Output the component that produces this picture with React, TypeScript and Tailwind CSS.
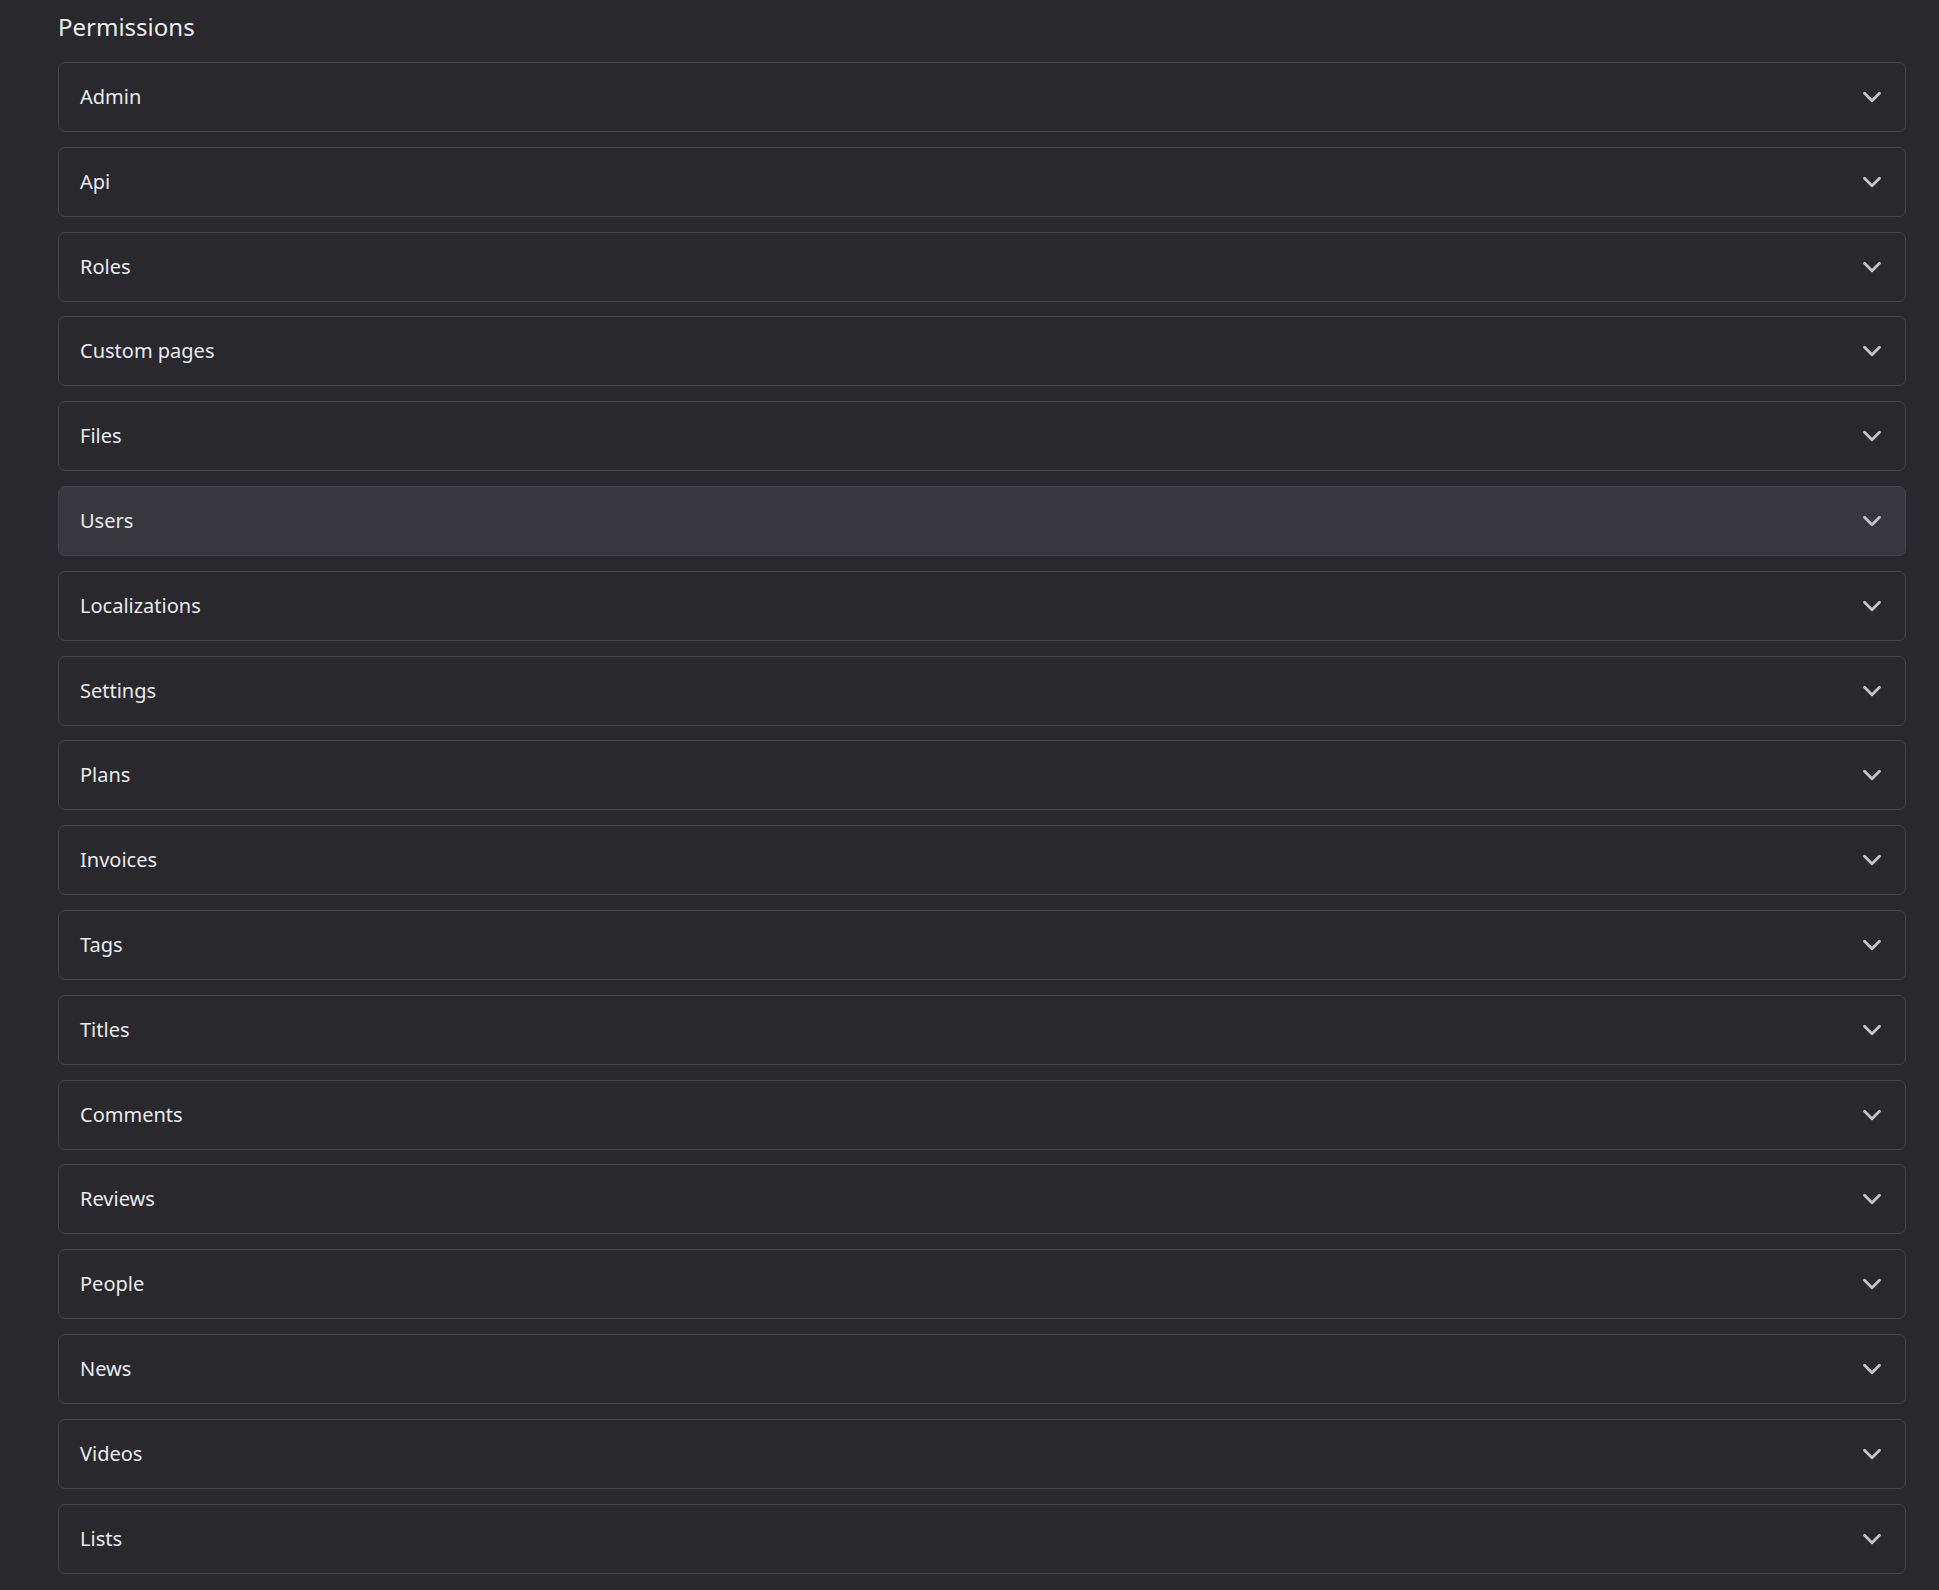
import React, { useState } from 'react';

const groups = [
  'Admin',
  'Api',
  'Roles',
  'Custom pages',
  'Files',
  'Users',
  'Localizations',
  'Settings',
  'Plans',
  'Invoices',
  'Tags',
  'Titles',
  'Comments',
  'Reviews',
  'People',
  'News',
  'Videos',
  'Lists',
];

const Chevron = () => (
  <svg
    width="20"
    height="20"
    viewBox="0 0 16 16"
    fill="none"
    stroke="currentColor"
    strokeWidth="2.3"
    strokeLinecap="round"
    strokeLinejoin="round"
    className="shrink-0 text-[#c3c3c7]"
  >
    <path d="M2 5L8 11L14 5" />
  </svg>
);

const PermissionRow: React.FC<{ label: string; hovered: boolean }> = ({ label, hovered }) => (
  <button
    type="button"
    className={`flex h-[70px] w-full items-center justify-between rounded-[7px] border border-[#45444b] pl-[21px] pr-[23px] text-left text-[20px] leading-[30px] text-[#e9ecef] ${
      hovered ? 'bg-[#38373d]' : 'bg-[#29282d]'
    }`}
  >
    <span>{label}</span>
    <Chevron />
  </button>
);

export default function App() {
  const [hovered] = useState('Users');

  return (
    <div
      className="min-h-[1590px] bg-[#29282d] pl-[58px] pr-[33px]"
      style={{ fontFamily: '"Noto Sans", "Open Sans", sans-serif' }}
    >
      <h5 className="pt-[12px] pb-[20px] text-[24px] leading-[30px] text-[#e9ecef]">Permissions</h5>
      <div className="flex flex-col gap-[14.8px]">
        {groups.map((g) => (
          <PermissionRow key={g} label={g} hovered={g === hovered} />
        ))}
      </div>
    </div>
  );
}
